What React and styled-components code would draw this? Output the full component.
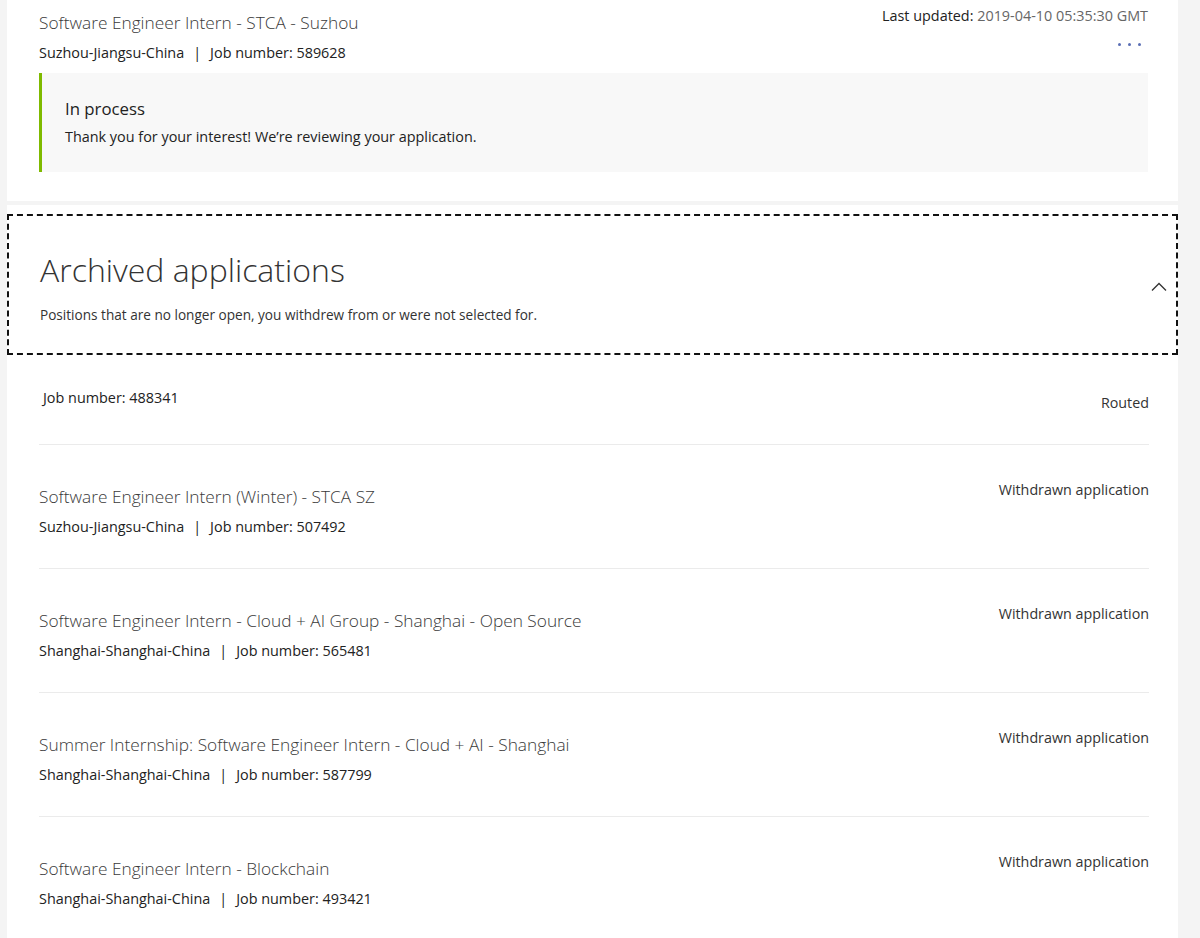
import React from 'react';
import styled, { createGlobalStyle } from 'styled-components';

const GlobalStyle = createGlobalStyle`
body {
  margin: 0;
  background-color: #f4f4f4;
  font-family: "Open Sans", "Noto Sans", sans-serif;
  color: #262626;
}
`

const Page = styled.div`
display: flex;
flex-direction: column;
gap: 4px;
padding: 0 22px 0 7px;
`

const Card = styled.div`
background-color: #fff;
padding: ${props => props.pad || '0'};
`

const TopRow = styled.div`
display: flex;
justify-content: space-between;
align-items: flex-start;
`

const Title = styled.div`
font-size: 17.3px;
font-weight: 300;
color: #3a3a3a;
line-height: 20px;
margin-top: ${props => props.mt || '0'};
`

const Sub = styled.div`
font-size: 14.4px;
color: #222;
margin-top: ${props => props.mt || '11px'};
line-height: 18px;
`

const Sep = styled.span`
margin: 0 9px;
`

const Meta = styled.div`
display: flex;
flex-direction: column;
align-items: flex-end;
font-size: 14.4px;
margin-top: -6px;
`

const Updated = styled.div`
color: #222;
line-height: 18px;
span {
  color: #666;
}
`

const Dots = styled.div`
display: flex;
gap: 7px;
margin: 18px 7px 0 0;
span {
  width: 3px;
  height: 3px;
  border-radius: 50%;
  background-color: #5b6fb5;
}
`

const Status = styled.div`
margin-top: 11px;
background-color: #f8f8f8;
border-left: 3px solid #7fba00;
padding: 26px 23px 26px;
`

const StatusTitle = styled.div`
font-size: 16.8px;
color: #222;
line-height: 20px;
`

const StatusText = styled.div`
font-size: 14.4px;
color: #222;
margin-top: 9px;
line-height: 18px;
`

const Header = styled.div`
margin-top: 9px;
border: 2px dashed #111;
display: flex;
justify-content: space-between;
align-items: center;
padding: 34px 9px 30px 31px;
`

const HeaderTitle = styled.h2`
margin: 0;
font-size: 32px;
font-weight: 300;
color: #333;
line-height: 40px;
`

const HeaderText = styled.div`
font-size: 13.6px;
color: #333;
margin-top: 17px;
line-height: 16px;
`

const List = styled.div`
padding: 0 29px 0 32px;
`

const Row = styled.div`
display: flex;
justify-content: space-between;
align-items: flex-start;
padding: ${props => props.pad};
border-bottom: ${props => props.last ? 'none' : '1px solid #ebebeb'};
`

const State = styled.div`
font-size: 14.3px;
color: #333;
line-height: 18px;
margin-top: ${props => props.mt || '0'};
`

const archived = [
  { title: 'Software Engineer Intern (Winter) - STCA SZ', loc: 'Suzhou-Jiangsu-China', num: '507492' },
  { title: 'Software Engineer Intern - Cloud + AI Group - Shanghai - Open Source', loc: 'Shanghai-Shanghai-China', num: '565481' },
  { title: 'Summer Internship: Software Engineer Intern - Cloud + AI - Shanghai', loc: 'Shanghai-Shanghai-China', num: '587799' },
  { title: 'Software Engineer Intern - Blockchain', loc: 'Shanghai-Shanghai-China', num: '493421' },
];

function App() {
  return (
    <Page>
      <GlobalStyle />
      <Card pad="13px 30px 29px 32px">
        <TopRow>
          <div>
            <Title>Software Engineer Intern - STCA - Suzhou</Title>
            <Sub>Suzhou-Jiangsu-China<Sep>|</Sep>Job number: 589628</Sub>
          </div>
          <Meta>
            <Updated>Last updated: <span>2019-04-10 05:35:30 GMT</span></Updated>
            <Dots><span /><span /><span /></Dots>
          </Meta>
        </TopRow>
        <Status>
          <StatusTitle>In process</StatusTitle>
          <StatusText>Thank you for your interest! We’re reviewing your application.</StatusText>
        </Status>
      </Card>
      <Card>
        <Header>
          <div>
            <HeaderTitle>Archived applications</HeaderTitle>
            <HeaderText>Positions that are no longer open, you withdrew from or were not selected for.</HeaderText>
          </div>
          <svg width="16" height="10" viewBox="0 0 16 10">
            <path d="M1 8.5 L8 1.5 L15 8.5" fill="none" stroke="#333" strokeWidth="1.3" />
          </svg>
        </Header>
        <List>
          <Row pad="34px 0 32px 4px">
            <Sub mt="0">Job number: 488341</Sub>
            <State mt="5px">Routed</State>
          </Row>
          {archived.map((item, index) => (
            <Row key={index} pad="36px 0 32px 0" last={index === archived.length - 1}>
              <div>
                <Title mt="6px">{item.title}</Title>
                <Sub>{item.loc}<Sep>|</Sep>Job number: {item.num}</Sub>
              </div>
              <State>Withdrawn application</State>
            </Row>
          ))}
        </List>
      </Card>
    </Page>
  );
}

export default App;
